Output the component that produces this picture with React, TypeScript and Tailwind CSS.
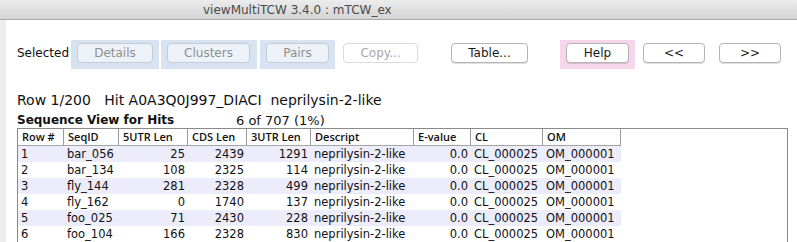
import React from 'react';

interface Hit {
  row: number;
  seqId: string;
  utr5: number;
  cds: number;
  utr3: number;
  descript: string;
  evalue: string;
  cl: string;
  om: string;
}

const hits: Hit[] = [
  { row: 1, seqId: 'bar_056', utr5: 25, cds: 2439, utr3: 1291, descript: 'neprilysin-2-like', evalue: '0.0', cl: 'CL_000025', om: 'OM_000001' },
  { row: 2, seqId: 'bar_134', utr5: 108, cds: 2325, utr3: 114, descript: 'neprilysin-2-like', evalue: '0.0', cl: 'CL_000025', om: 'OM_000001' },
  { row: 3, seqId: 'fly_144', utr5: 281, cds: 2328, utr3: 499, descript: 'neprilysin-2-like', evalue: '0.0', cl: 'CL_000025', om: 'OM_000001' },
  { row: 4, seqId: 'fly_162', utr5: 0, cds: 1740, utr3: 137, descript: 'neprilysin-2-like', evalue: '0.0', cl: 'CL_000025', om: 'OM_000001' },
  { row: 5, seqId: 'foo_025', utr5: 71, cds: 2430, utr3: 228, descript: 'neprilysin-2-like', evalue: '0.0', cl: 'CL_000025', om: 'OM_000001' },
  { row: 6, seqId: 'foo_104', utr5: 166, cds: 2328, utr3: 830, descript: 'neprilysin-2-like', evalue: '0.0', cl: 'CL_000025', om: 'OM_000001' },
];

const columns = [
  { label: 'Row #', w: 'w-[46px]', right: false },
  { label: 'SeqID', w: 'w-[55px]', right: false },
  { label: '5UTR Len', w: 'w-[69px]', right: true },
  { label: 'CDS Len', w: 'w-[59px]', right: true },
  { label: '3UTR Len', w: 'w-[64px]', right: true },
  { label: 'Descript', w: 'w-[103px]', right: false },
  { label: 'E-value', w: 'w-[57px]', right: true },
  { label: 'CL', w: 'w-[72px]', right: false },
  { label: 'OM', w: 'w-[78px]', right: false },
];

const MacButton = ({ label, width, disabled, tinted }: { label: string; width: string; disabled?: boolean; tinted?: boolean }) => (
  <div
    className={`${width} h-[20px] rounded-[4px] border flex items-center justify-center text-[12px] leading-none
      ${disabled
        ? tinted
          ? 'bg-[#edf2f8] border-[#c3ccd8] text-[#8e8e8e]'
          : 'bg-white border-[#dadada] text-[#a8a8a8]'
        : 'bg-white border-[#b4b4b4] text-[#1a1a1a] shadow-[0_1px_0_rgba(0,0,0,0.12)]'}
    `}
  >
    {label}
  </div>
);

export default function App() {
  return (
    <div className="w-[797px] h-[242px] bg-white overflow-hidden flex flex-col" style={{ fontFamily: '"DejaVu Sans", sans-serif' }}>
      {/* window title */}
      <div className="h-[20px] shrink-0 bg-gradient-to-b from-[#ececec] to-[#d4d4d4] border-b border-[#a9a9a9] flex items-center pl-[203px] text-[12px] text-[#4a4a4a]">
        viewMultiTCW 3.4.0 : mTCW_ex
      </div>

      <div className="flex flex-1">
        <div className="w-[6px] bg-[#ededed] shrink-0" />

        <div className="flex-1 pl-[11px] pt-[20px]">
          {/* button row */}
          <div className="flex items-start">
            <div className="w-[54px] h-[26px] flex items-center text-[12px] text-[#111]">Selected</div>
            <div className="w-[88px] h-[29px] bg-[#d7e3f1] pt-[3px] pl-[6px]">
              <MacButton label="Details" width="w-[76px]" disabled tinted />
            </div>
            <div className="w-[96px] h-[29px] bg-[#d7e3f1] pt-[3px] pl-[6px] ml-[2px]">
              <MacButton label="Clusters" width="w-[83px]" disabled tinted />
            </div>
            <div className="w-[75px] h-[29px] bg-[#d7e3f1] pt-[3px] pl-[6px] ml-[3px]">
              <MacButton label="Pairs" width="w-[63px]" disabled tinted />
            </div>
            <div className="ml-[8px] mt-[3px]">
              <MacButton label="Copy..." width="w-[75px]" disabled />
            </div>
            <div className="ml-[33px] mt-[3px]">
              <MacButton label="Table..." width="w-[77px]" />
            </div>
            <div className="w-[75px] h-[29px] bg-[#f5d6ea] pt-[3px] pl-[6px] ml-[32px]">
              <MacButton label="Help" width="w-[63px]" />
            </div>
            <div className="ml-[8px] mt-[3px]">
              <MacButton label="<<" width="w-[62px]" />
            </div>
            <div className="ml-[14px] mt-[3px]">
              <MacButton label=">>" width="w-[62px]" />
            </div>
          </div>

          {/* row info */}
          <div className="mt-[23px] h-[17px] text-[14px] leading-[17px] text-[#111] whitespace-pre">
            Row 1/200   Hit A0A3Q0J997_DIACI  neprilysin-2-like
          </div>

          <div className="mt-[4px] h-[15px] flex items-end text-[12px] leading-[15px] text-[#111]">
            <span className="w-[219px] font-bold">Sequence View for Hits</span>
            <span className="whitespace-pre text-[13px]">6 of 707 (1%)</span>
          </div>

          {/* table */}
          <div className="w-[771px] h-[200px] border-t border-l border-r border-[#8a8a8a] text-[11.5px] text-[#111]">
            <div className="flex h-[17px]" style={{ fontFamily: '"Open Sans", sans-serif' }}>
              {columns.map((c) => (
                <div
                  key={c.label}
                  className={`${c.w} shrink-0 border-r border-b border-r-[#9c9c9c] border-b-[#a5a5a5] pl-[4px] text-[11px] font-semibold leading-[16px] whitespace-nowrap overflow-hidden`}
                >
                  {c.label}
                </div>
              ))}
            </div>
            {hits.map((h) => {
              const cells = [h.row, h.seqId, h.utr5, h.cds, h.utr3, h.descript, h.evalue, h.cl, h.om];
              return (
                <div key={h.row} className={`flex h-[16px] w-[603px] ${h.row % 2 === 1 ? 'bg-[#ececfb]' : 'bg-white'}`}>
                  {cells.map((v, i) => (
                    <div
                      key={i}
                      className={`${columns[i].w} shrink-0 leading-[16px] whitespace-nowrap overflow-hidden
                        ${columns[i].right ? 'text-right pr-[3px]' : 'pl-[3px]'}
                      `}
                    >
                      {v}
                    </div>
                  ))}
                </div>
              );
            })}
          </div>
        </div>
      </div>
    </div>
  );
}
